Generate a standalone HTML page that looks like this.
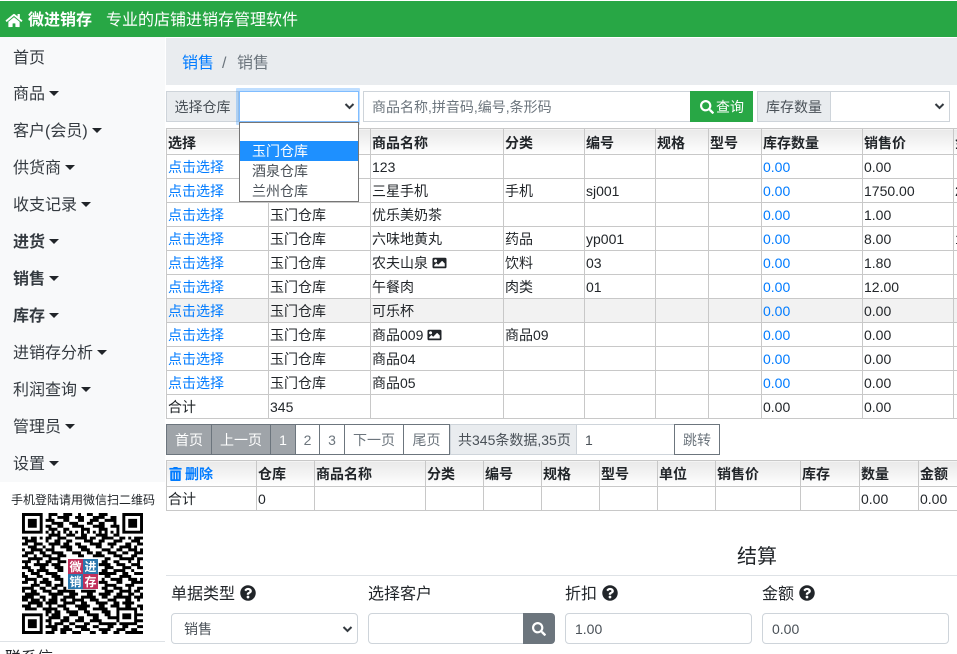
<!DOCTYPE html>
<html lang="zh"><head><meta charset="utf-8"><title>微进销存</title>
<style>
*{box-sizing:border-box}
html,body{margin:0;padding:0;width:957px;height:654px;overflow:hidden;background:#fff}
body{position:relative;font-family:"Liberation Sans","Noto Sans CJK SC",sans-serif;font-size:14px;color:#212529}
.a{position:absolute;white-space:nowrap}
.top{left:0;top:1px;width:957px;height:36px;background:#28a745;color:#fff;font-size:16px;line-height:39px}
.side{left:0;top:37px;width:165px;height:445px;background:#f8f9fa}
.nav{left:13px;font-size:16px;line-height:24px;color:#343a40}
.nav.b{font-weight:bold}
.nav i{display:inline-block;margin-left:4px;vertical-align:3px;border-top:5px solid #212529;border-left:5px solid transparent;border-right:5px solid transparent}
.crumb{left:166px;top:38px;width:791px;height:47px;background:#e9ecef;font-size:16px;line-height:51px;color:#6c757d}
.lab{background:#e9ecef;border:1px solid #ced4da;color:#495057;text-align:center;line-height:31px;height:31px;top:91px}
.box{background:#fff;border:1px solid #ced4da;height:31px;top:91px}
.chev{position:absolute;width:11px;height:8px}
table{border-collapse:collapse;table-layout:fixed;position:absolute;background:#fff}
td,th{border:1px solid #c8c8c8;padding:0 0 0 1px;white-space:nowrap;overflow:hidden;font-size:14px;line-height:20px;text-align:left;color:#212529;font-weight:normal}
th{font-weight:bold;background:linear-gradient(#e9e9e9,#fff);height:26px}
.t1 th{padding-top:2px}
td{height:24px}
.l{color:#007bff}
.g td{background:#f2f2f2}
.im{width:15px;height:14px;vertical-align:-2px;fill:#212529}
.pg{top:424px;height:31px;line-height:31px;text-align:center;border:1px solid #6c757d;color:#6c757d;background:#fff;font-size:14px}
.pg.on{background:#9fa4a9;color:#fff}
.h{font-size:16px;top:585px;line-height:20px;color:#212529}
.q{width:16px;height:16px;vertical-align:-2px;fill:#212529;margin-left:1px}
.in{top:613px;height:31px;border:1px solid #ced4da;border-radius:4px;background:#fff;color:#495057;line-height:30px;padding-left:12px}
</style></head><body>

<div class="a top"><svg style="position:absolute;left:5px;top:12px;width:18px;height:15px" viewBox="0 0 576 512" fill="#fff"><path d="M280.37 148.26L96 300.11V464a16 16 0 0 0 16 16l112.06-.29a16 16 0 0 0 15.92-16V368a16 16 0 0 1 16-16h64a16 16 0 0 1 16 16v95.64a16 16 0 0 0 16 16.05L464 480a16 16 0 0 0 16-16V300L295.67 148.26a12.19 12.19 0 0 0-15.3 0zM571.6 251.47L488 182.56V44.05a12 12 0 0 0-12-12h-56a12 12 0 0 0-12 12v72.61L318.47 43a48 48 0 0 0-61 0L4.34 251.47a12 12 0 0 0-1.6 16.9l25.5 31A12 12 0 0 0 45.15 301l235.22-193.74a12.19 12.19 0 0 1 15.3 0L530.9 301a12 12 0 0 0 16.9-1.6l25.5-31a12 12 0 0 0-1.7-16.93z"/></svg><b style="position:absolute;left:28px">微进销存</b><span style="position:absolute;left:106px">专业的店铺进销存管理软件</span></div>

<div class="a side"></div>
<div class="a nav" style="top:47px">首页</div>
<div class="a nav" style="top:83px">商品<i></i></div>
<div class="a nav" style="top:120px">客户(会员)<i></i></div>
<div class="a nav" style="top:157px">供货商<i></i></div>
<div class="a nav" style="top:194px">收支记录<i></i></div>
<div class="a nav b" style="top:231px">进货<i></i></div>
<div class="a nav b" style="top:268px">销售<i></i></div>
<div class="a nav b" style="top:305px">库存<i></i></div>
<div class="a nav" style="top:342px">进销存分析<i></i></div>
<div class="a nav" style="top:379px">利润查询<i></i></div>
<div class="a nav" style="top:416px">管理员<i></i></div>
<div class="a nav" style="top:453px">设置<i></i></div>
<div class="a" style="left:11px;top:492px;font-size:12px;line-height:17px;color:#212529">手机登陆请用微信扫二维码</div>

<svg class="a" style="left:22px;top:513px;width:121px;height:121px" viewBox="0 0 41 41"><path fill="none" stroke="#000" stroke-width="1" d="M0 .5h7M9 .5h3M14 .5h3M19 .5h1M22 .5h2M26 .5h3M34 .5h7
M0 1.5h1M6 1.5h1M9 1.5h1M12 1.5h4M18 1.5h3M24 1.5h4M30 1.5h2M34 1.5h1M40 1.5h1
M0 2.5h1M2 2.5h3M6 2.5h1M8 2.5h3M14 2.5h2M19 2.5h2M23 2.5h3M28 2.5h4M34 2.5h1M36 2.5h3M40 2.5h1
M0 3.5h1M2 3.5h3M6 3.5h1M10 3.5h4M16 3.5h3M22 3.5h2M26 3.5h2M31 3.5h1M34 3.5h1M36 3.5h3M40 3.5h1
M0 4.5h1M2 4.5h3M6 4.5h1M8 4.5h2M12 4.5h2M17 4.5h4M24 4.5h4M30 4.5h3M34 4.5h1M36 4.5h3M40 4.5h1
M0 5.5h1M6 5.5h1M9 5.5h3M14 5.5h2M20 5.5h3M26 5.5h3M32 5.5h1M34 5.5h1M40 5.5h1
M0 6.5h7M8 6.5h1M10 6.5h1M12 6.5h1M14 6.5h1M16 6.5h1M18 6.5h1M20 6.5h1M22 6.5h1M24 6.5h1M26 6.5h1M28 6.5h1M30 6.5h1M32 6.5h1M34 6.5h7
M9 7.5h4M15 7.5h3M20 7.5h2M25 7.5h4M31 7.5h2
M0 8.5h2M3 8.5h2M6 8.5h1M8 8.5h2M12 8.5h3M18 8.5h4M23 8.5h2M27 8.5h4M33 8.5h2M36 8.5h1M38 8.5h3
M1 9.5h4M8 9.5h1M11 9.5h2M15 9.5h2M21 9.5h3M26 9.5h2M31 9.5h3M37 9.5h3
M0 10.5h2M4 10.5h3M9 10.5h4M14 10.5h2M18 10.5h2M23 10.5h4M29 10.5h3M35 10.5h2M39 10.5h2
M2 11.5h3M7 11.5h1M10 11.5h1M13 11.5h4M19 11.5h3M25 11.5h2M30 11.5h1M33 11.5h4M38 11.5h1
M0 12.5h1M3 12.5h4M8 12.5h3M15 12.5h2M20 12.5h3M27 12.5h3M32 12.5h2M36 12.5h3M40 12.5h1
M1 13.5h3M6 13.5h2M10 13.5h4M17 13.5h3M22 13.5h2M25 13.5h2M29 13.5h3M34 13.5h2M38 13.5h3
M0 14.5h2M4 14.5h1M7 14.5h3M12 14.5h3M19 14.5h2M24 14.5h4M31 14.5h3M37 14.5h2
M2 15.5h5M9 15.5h4M28 15.5h2M33 15.5h5M39 15.5h2
M0 16.5h3M5 16.5h1M8 16.5h2M12 16.5h3M27 16.5h2M31 16.5h2M36 16.5h1M39 16.5h1
M1 17.5h1M4 17.5h5M10 17.5h3M26 17.5h4M32 17.5h3M37 17.5h3
M0 18.5h3M6 18.5h2M11 18.5h3M28 18.5h3M34 18.5h3M39 18.5h2
M2 19.5h2M5 19.5h4M12 19.5h2M27 19.5h2M31 19.5h4M37 19.5h1
M0 20.5h1M3 20.5h3M8 20.5h4M26 20.5h6M34 20.5h2M38 20.5h3
M0 21.5h2M5 21.5h2M10 21.5h3M28 21.5h2M33 21.5h4
M1 22.5h4M7 22.5h2M11 22.5h3M27 22.5h1M30 22.5h4M36 22.5h3M40 22.5h1
M0 23.5h2M4 23.5h1M6 23.5h4M13 23.5h1M26 23.5h3M32 23.5h2M37 23.5h4
M3 24.5h3M8 24.5h2M11 24.5h3M28 24.5h4M35 24.5h3
M0 25.5h4M6 25.5h2M10 25.5h2M14 25.5h1M27 25.5h2M31 25.5h3M36 25.5h1M39 25.5h2
M0 26.5h1M3 26.5h2M7 26.5h3M12 26.5h6M20 26.5h5M28 26.5h3M33 26.5h4M38 26.5h2
M1 27.5h5M9 27.5h5M16 27.5h3M22 27.5h2M26 27.5h4M32 27.5h2M36 27.5h2M40 27.5h1
M0 28.5h4M6 28.5h2M10 28.5h2M14 28.5h4M20 28.5h5M27 28.5h2M31 28.5h6M38 28.5h3
M0 29.5h2M3 29.5h3M7 29.5h1M9 29.5h3M13 29.5h2M17 29.5h4M23 29.5h3M29 29.5h3M35 29.5h2M39 29.5h1
M2 30.5h5M8 30.5h4M14 30.5h4M20 30.5h2M25 30.5h4M31 30.5h2M34 30.5h4
M0 31.5h3M5 31.5h2M9 31.5h1M12 31.5h3M18 31.5h5M26 31.5h2M30 31.5h3M35 31.5h2M39 31.5h2
M1 32.5h4M7 32.5h5M14 32.5h2M19 32.5h3M24 32.5h5M32 32.5h7M40 32.5h1
M8 33.5h2M11 33.5h2M15 33.5h4M21 33.5h2M27 33.5h3M32 33.5h1M38 33.5h1
M0 34.5h7M8 34.5h1M10 34.5h3M16 34.5h3M22 34.5h4M28 34.5h2M32 34.5h1M34 34.5h3M38 34.5h3
M0 35.5h1M6 35.5h1M9 35.5h4M14 35.5h2M19 35.5h2M24 35.5h2M29 35.5h4M34 35.5h3M38 35.5h1
M0 36.5h1M2 36.5h3M6 36.5h1M8 36.5h2M13 36.5h3M18 36.5h3M23 36.5h4M32 36.5h1M38 36.5h3
M0 37.5h1M2 37.5h3M6 37.5h1M9 37.5h1M11 37.5h3M16 37.5h2M21 37.5h2M26 37.5h6M33 37.5h6
M0 38.5h1M2 38.5h3M6 38.5h1M8 38.5h4M14 38.5h2M18 38.5h4M24 38.5h2M29 38.5h2M34 38.5h2M39 38.5h2
M0 39.5h1M6 39.5h1M10 39.5h2M13 39.5h4M20 39.5h3M26 39.5h4M32 39.5h3M37 39.5h2
M0 40.5h7M8 40.5h3M13 40.5h2M17 40.5h3M23 40.5h2M27 40.5h2M31 40.5h2M35 40.5h6"/></svg>
<div class="a" style="left:67px;top:558px;width:31px;height:31px;background:#fff;border-radius:4px"></div>
<div class="a" style="left:68px;top:559px;width:15px;height:15px;background:#c1315c;color:#fff;font:bold 12px/15px 'Noto Sans CJK SC',sans-serif;text-align:center">微</div>
<div class="a" style="left:83px;top:559px;width:15px;height:15px;background:#2b78ae;color:#fff;font:bold 12px/15px 'Noto Sans CJK SC',sans-serif;text-align:center">进</div>
<div class="a" style="left:68px;top:574px;width:15px;height:15px;background:#2b78ae;color:#fff;font:bold 12px/15px 'Noto Sans CJK SC',sans-serif;text-align:center">销</div>
<div class="a" style="left:83px;top:574px;width:15px;height:15px;background:#c1315c;color:#fff;font:bold 12px/15px 'Noto Sans CJK SC',sans-serif;text-align:center">存</div>

<div class="a" style="left:0;top:641px;width:165px;height:1px;background:#dee2e6"></div>
<div class="a" style="left:5px;top:649px;font-size:16px;line-height:20px">联系信 &nbsp; &nbsp; &nbsp;: &nbsp; .</div>

<div class="a crumb"><span class="l" style="position:absolute;left:16px">销售</span><span style="position:absolute;left:56px">/</span><span style="position:absolute;left:71px">销售</span></div>

<div class="a lab" style="left:166px;width:73px">选择仓库</div>
<div class="a" style="left:236px;top:88px;width:124px;height:37px;background:rgba(0,123,255,.25);border-radius:1px"></div>
<div class="a box" style="left:239px;width:120px;border-color:#80bdff"></div>
<svg class="chev" style="left:344px;top:102px" viewBox="0 0 11 8"><path d="M1.5 2L5.5 6L9.5 2" fill="none" stroke="#343a40" stroke-width="2"/></svg>

<div class="a box" style="left:363px;width:328px;color:#6c757d;padding-left:8px;line-height:31px">商品名称,拼音码,编号,条形码</div>
<div class="a" style="left:690px;top:91px;width:63px;height:31px;background:#28a745;color:#fff;line-height:32px;padding-left:26px;font-size:14px">查询<svg style="position:absolute;left:10px;top:9px;width:14px;height:14px" viewBox="0 0 512 512" fill="#fff"><path d="M505 442.7L405.3 343c-4.5-4.5-10.6-7-17-7H372c27.6-35.3 44-79.7 44-128C416 93.1 322.9 0 208 0S0 93.1 0 208s93.1 208 208 208c48.3 0 92.7-16.4 128-44v16.3c0 6.4 2.5 12.5 7 17l99.7 99.7c9.4 9.4 24.6 9.4 33.9 0l28.3-28.3c9.4-9.4 9.4-24.6.1-34zM208 336c-70.7 0-128-57.2-128-128 0-70.7 57.2-128 128-128 70.7 0 128 57.2 128 128 0 70.7-57.2 128-128 128z"/></svg></div>
<div class="a lab" style="left:757px;width:74px">库存数量</div>
<div class="a box" style="left:830px;width:120px"></div>
<svg class="chev" style="left:934px;top:102px" viewBox="0 0 11 8"><path d="M1.5 2L5.5 6L9.5 2" fill="none" stroke="#343a40" stroke-width="2"/></svg>

<table class="t1" style="left:166px;top:128px;width:792px">
<colgroup><col style="width:102px"><col style="width:102px"><col style="width:133px"><col style="width:81px"><col style="width:71px"><col style="width:53px"><col style="width:53px"><col style="width:101px"><col style="width:91px"><col style="width:5px"></colgroup>
<tr><th>选择</th><th>仓库</th><th>商品名称</th><th>分类</th><th>编号</th><th>规格</th><th>型号</th><th>库存数量</th><th>销售价</th><th>金额</th></tr>
<tr><td class="l">点击选择</td><td>玉门仓库</td><td>123</td><td></td><td></td><td></td><td></td><td class="l">0.00</td><td>0.00</td><td></td></tr>
<tr><td class="l">点击选择</td><td>玉门仓库</td><td>三星手机</td><td>手机</td><td>sj001</td><td></td><td></td><td class="l">0.00</td><td>1750.00</td><td>2</td></tr>
<tr><td class="l">点击选择</td><td>玉门仓库</td><td>优乐美奶茶</td><td></td><td></td><td></td><td></td><td class="l">0.00</td><td>1.00</td><td></td></tr>
<tr><td class="l">点击选择</td><td>玉门仓库</td><td>六味地黄丸</td><td>药品</td><td>yp001</td><td></td><td></td><td class="l">0.00</td><td>8.00</td><td>1</td></tr>
<tr><td class="l">点击选择</td><td>玉门仓库</td><td>农夫山泉 <svg class="im" viewBox="0 0 512 512"><path d="M464 448H48c-26.51 0-48-21.49-48-48V112c0-26.51 21.49-48 48-48h416c26.51 0 48 21.49 48 48v288c0 26.51-21.49 48-48 48zM112 120c-30.928 0-56 25.072-56 56s25.072 56 56 56 56-25.072 56-56-25.072-56-56-56zM64 384h384V272l-87.515-87.515c-4.686-4.686-12.284-4.686-16.971 0L208 320l-55.515-55.515c-4.686-4.686-12.284-4.686-16.971 0L64 336v48z"/></svg></td><td>饮料</td><td>03</td><td></td><td></td><td class="l">0.00</td><td>1.80</td><td></td></tr>
<tr><td class="l">点击选择</td><td>玉门仓库</td><td>午餐肉</td><td>肉类</td><td>01</td><td></td><td></td><td class="l">0.00</td><td>12.00</td><td></td></tr>
<tr class="g"><td class="l">点击选择</td><td>玉门仓库</td><td>可乐杯</td><td></td><td></td><td></td><td></td><td class="l">0.00</td><td>0.00</td><td></td></tr>
<tr><td class="l">点击选择</td><td>玉门仓库</td><td>商品009 <svg class="im" viewBox="0 0 512 512"><path d="M464 448H48c-26.51 0-48-21.49-48-48V112c0-26.51 21.49-48 48-48h416c26.51 0 48 21.49 48 48v288c0 26.51-21.49 48-48 48zM112 120c-30.928 0-56 25.072-56 56s25.072 56 56 56 56-25.072 56-56-25.072-56-56-56zM64 384h384V272l-87.515-87.515c-4.686-4.686-12.284-4.686-16.971 0L208 320l-55.515-55.515c-4.686-4.686-12.284-4.686-16.971 0L64 336v48z"/></svg></td><td>商品09</td><td></td><td></td><td></td><td class="l">0.00</td><td>0.00</td><td></td></tr>
<tr><td class="l">点击选择</td><td>玉门仓库</td><td>商品04</td><td></td><td></td><td></td><td></td><td class="l">0.00</td><td>0.00</td><td></td></tr>
<tr><td class="l">点击选择</td><td>玉门仓库</td><td>商品05</td><td></td><td></td><td></td><td></td><td class="l">0.00</td><td>0.00</td><td></td></tr>
<tr><td>合计</td><td>345</td><td></td><td></td><td></td><td></td><td></td><td>0.00</td><td>0.00</td><td></td></tr>
</table>

<div class="a" style="left:239px;top:122px;width:120px;height:80px;background:#fff;border:1px solid #767676;font-size:14px;line-height:20px;color:#495057">
<div style="height:18px"></div>
<div style="height:20px;background:#1e90ff;color:#fff;padding-left:12px">玉门仓库</div>
<div style="height:20px;padding-left:12px">酒泉仓库</div>
<div style="height:20px;padding-left:12px">兰州仓库</div>
</div>

<div class="a pg on" style="left:166px;width:46px">首页</div>
<div class="a pg on" style="left:211px;width:60px">上一页</div>
<div class="a pg on" style="left:270px;width:26px">1</div>
<div class="a pg" style="left:295px;width:25px">2</div>
<div class="a pg" style="left:319px;width:26px">3</div>
<div class="a pg" style="left:344px;width:60px">下一页</div>
<div class="a pg" style="left:403px;width:47px">尾页</div>
<div class="a" style="left:450px;top:424px;width:127px;height:31px;background:#e9ecef;border:1px solid #ced4da;color:#495057;line-height:31px;padding-left:7px">共345条数据,35页</div>
<div class="a" style="left:576px;top:424px;width:99px;height:31px;background:#fff;border:1px solid #ced4da;color:#495057;line-height:31px;padding-left:8px">1</div>
<div class="a pg" style="left:674px;width:46px">跳转</div>

<table style="left:166px;top:460px;width:791px">
<colgroup><col style="width:90px"><col style="width:58px"><col style="width:111px"><col style="width:58px"><col style="width:58px"><col style="width:58px"><col style="width:58px"><col style="width:58px"><col style="width:85px"><col style="width:59px"><col style="width:59px"><col style="width:39px"></colgroup>
<tr><th class="l" style="color:#007bff"><svg style="width:13px;height:14px;vertical-align:-2px;margin:0 3px 0 1px" viewBox="0 0 448 512" fill="#007bff"><path d="M32 464a48 48 0 0 0 48 48h288a48 48 0 0 0 48-48V128H32zm272-256a16 16 0 0 1 32 0v224a16 16 0 0 1-32 0zm-96 0a16 16 0 0 1 32 0v224a16 16 0 0 1-32 0zm-96 0a16 16 0 0 1 32 0v224a16 16 0 0 1-32 0zM432 32H312l-9.4-18.7A24 24 0 0 0 281.1 0H166.8a23.72 23.72 0 0 0-21.4 13.3L136 32H16A16 16 0 0 0 0 48v32a16 16 0 0 0 16 16h416a16 16 0 0 0 16-16V48a16 16 0 0 0-16-16z"/></svg>删除</th><th>仓库</th><th>商品名称</th><th>分类</th><th>编号</th><th>规格</th><th>型号</th><th>单位</th><th>销售价</th><th>库存</th><th>数量</th><th>金额</th></tr>
<tr><td>合计</td><td>0</td><td></td><td></td><td></td><td></td><td></td><td></td><td></td><td></td><td>0.00</td><td>0.00</td></tr>
</table>

<div class="a" style="left:737px;top:544px;font-size:20px;line-height:26px;color:#212529">结算</div>
<div class="a" style="left:166px;top:575px;width:791px;height:1px;background:#dee2e6"></div>

<div class="a h" style="left:171px">单据类型 <svg class="q" viewBox="0 0 512 512"><path d="M504 256c0 136.997-111.043 248-248 248S8 392.997 8 256C8 119.083 119.043 8 256 8s248 111.083 248 248zM262.655 90c-54.497 0-89.255 22.957-116.549 63.758-3.536 5.286-2.353 12.415 2.715 16.258l34.699 26.31c5.205 3.947 12.621 3.008 16.665-2.122 17.864-22.658 30.113-35.797 57.303-35.797 20.429 0 45.698 13.148 45.698 32.958 0 14.976-12.363 22.667-32.534 33.976C247.128 238.528 216 254.941 216 296v4c0 6.627 5.373 12 12 12h56c6.627 0 12-5.373 12-12v-1.333c0-28.462 83.186-29.647 83.186-106.667 0-58.002-60.165-102-116.531-102zM256 338c-25.365 0-46 20.635-46 46 0 25.364 20.635 46 46 46s46-20.636 46-46c0-25.365-20.635-46-46-46z"/></svg></div>
<div class="a h" style="left:368px">选择客户</div>
<div class="a h" style="left:565px">折扣 <svg class="q" viewBox="0 0 512 512"><path d="M504 256c0 136.997-111.043 248-248 248S8 392.997 8 256C8 119.083 119.043 8 256 8s248 111.083 248 248zM262.655 90c-54.497 0-89.255 22.957-116.549 63.758-3.536 5.286-2.353 12.415 2.715 16.258l34.699 26.31c5.205 3.947 12.621 3.008 16.665-2.122 17.864-22.658 30.113-35.797 57.303-35.797 20.429 0 45.698 13.148 45.698 32.958 0 14.976-12.363 22.667-32.534 33.976C247.128 238.528 216 254.941 216 296v4c0 6.627 5.373 12 12 12h56c6.627 0 12-5.373 12-12v-1.333c0-28.462 83.186-29.647 83.186-106.667 0-58.002-60.165-102-116.531-102zM256 338c-25.365 0-46 20.635-46 46 0 25.364 20.635 46 46 46s46-20.636 46-46c0-25.365-20.635-46-46-46z"/></svg></div>
<div class="a h" style="left:762px">金额 <svg class="q" viewBox="0 0 512 512"><path d="M504 256c0 136.997-111.043 248-248 248S8 392.997 8 256C8 119.083 119.043 8 256 8s248 111.083 248 248zM262.655 90c-54.497 0-89.255 22.957-116.549 63.758-3.536 5.286-2.353 12.415 2.715 16.258l34.699 26.31c5.205 3.947 12.621 3.008 16.665-2.122 17.864-22.658 30.113-35.797 57.303-35.797 20.429 0 45.698 13.148 45.698 32.958 0 14.976-12.363 22.667-32.534 33.976C247.128 238.528 216 254.941 216 296v4c0 6.627 5.373 12 12 12h56c6.627 0 12-5.373 12-12v-1.333c0-28.462 83.186-29.647 83.186-106.667 0-58.002-60.165-102-116.531-102zM256 338c-25.365 0-46 20.635-46 46 0 25.364 20.635 46 46 46s46-20.636 46-46c0-25.365-20.635-46-46-46z"/></svg></div>

<div class="a in" style="left:171px;width:187px">销售</div>
<svg class="chev" style="left:342px;top:625px" viewBox="0 0 11 8"><path d="M1.5 2L5.5 6L9.5 2" fill="none" stroke="#343a40" stroke-width="2"/></svg>
<div class="a in" style="left:368px;width:160px"></div>
<div class="a" style="left:523px;top:613px;width:32px;height:31px;background:#6c757d;border-radius:0 4px 4px 0"><svg style="position:absolute;left:9px;top:9px;width:14px;height:14px" viewBox="0 0 512 512" fill="#fff"><path d="M505 442.7L405.3 343c-4.5-4.5-10.6-7-17-7H372c27.6-35.3 44-79.7 44-128C416 93.1 322.9 0 208 0S0 93.1 0 208s93.1 208 208 208c48.3 0 92.7-16.4 128-44v16.3c0 6.4 2.5 12.5 7 17l99.7 99.7c9.4 9.4 24.6 9.4 33.9 0l28.3-28.3c9.4-9.4 9.4-24.6.1-34zM208 336c-70.7 0-128-57.2-128-128 0-70.7 57.2-128 128-128 70.7 0 128 57.2 128 128 0 70.7-57.2 128-128 128z"/></svg></div>
<div class="a in" style="left:565px;width:187px;padding-left:9px">1.00</div>
<div class="a in" style="left:762px;width:187px;padding-left:9px">0.00</div>
</body></html>
